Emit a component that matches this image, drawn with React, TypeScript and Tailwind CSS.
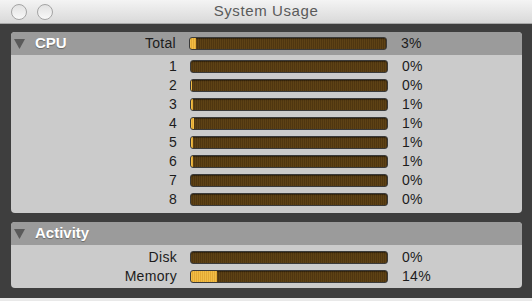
import React from 'react';

interface Row {
  label: string;
  fill: number;
  pct: string;
}

const cpuRows: Row[] = [
  { label: '1', fill: 0, pct: '0%' },
  { label: '2', fill: 1, pct: '0%' },
  { label: '3', fill: 1.5, pct: '1%' },
  { label: '4', fill: 2.5, pct: '1%' },
  { label: '5', fill: 1.5, pct: '1%' },
  { label: '6', fill: 1.5, pct: '1%' },
  { label: '7', fill: 0, pct: '0%' },
  { label: '8', fill: 0, pct: '0%' },
];

const activityRows: Row[] = [
  { label: 'Disk', fill: 0, pct: '0%' },
  { label: 'Memory', fill: 26, pct: '14%' },
];

const Meter: React.FC<{ fill: number }> = ({ fill }) => (
  <div className="w-[198px] h-[13px] rounded-[3px] border border-[#3a3a3a] overflow-hidden bg-[repeating-linear-gradient(90deg,#5e4215_0px,#5e4215_1px,#4f3610_1px,#4f3610_2px)] shadow-[inset_0_1px_1px_rgba(0,0,0,0.4)]">
    {fill > 0 && (
      <div
        className="h-full bg-[repeating-linear-gradient(90deg,#f2bd45_0px,#f2bd45_1px,#e2a935_1px,#e2a935_2px)]"
        style={{ width: `${fill}px` }}
      />
    )}
  </div>
);

const MeterRow: React.FC<{ row: Row }> = ({ row }) => (
  <div className="flex items-center h-[19px]">
    <div className="w-[166px] text-right text-[14px] tracking-[0.3px] text-[#1c1c1c]">{row.label}</div>
    <div className="ml-[13px]">
      <Meter fill={row.fill} />
    </div>
    <div className="ml-[14px] text-[14px] tracking-[0.3px] text-[#1c1c1c]">{row.pct}</div>
  </div>
);

const SectionHeader: React.FC<{ title: string; children?: React.ReactNode }> = ({ title, children }) => (
  <div className="flex items-center h-[23px] bg-[#9b9b9b] rounded-t-[4px]">
    <svg width="11" height="10" viewBox="0 0 11 10" className="ml-[3px]">
      <polygon points="0,0 11,0 5.5,10" fill="#5a5a5a" />
    </svg>
    <span className="ml-[10px] text-[15px] font-bold text-white [text-shadow:0_1px_1px_rgba(0,0,0,0.35)]">
      {title}
    </span>
    {children}
  </div>
);

export default function App() {
  return (
    <div
      className="w-[532px] h-[301px] bg-[#e9e9e9] overflow-hidden"
      style={{ fontFamily: '"Liberation Sans", Arial, sans-serif' }}
    >
      <div className="h-[298px] flex flex-col bg-[#3e3e3e]">
        {/* Title bar */}
        <div className="relative h-[24px] flex items-center justify-center bg-gradient-to-b from-[#f4f4f4] to-[#d9d9d9] border-b border-[#a8a8a8]">
          <div className="absolute left-[11px] top-[4px] flex gap-[10px]">
            <div className="w-[16px] h-[16px] rounded-full border border-[#a4a4a4] bg-gradient-to-b from-[#e2e2e2] to-[#f8f8f8]" />
            <div className="w-[16px] h-[16px] rounded-full border border-[#a4a4a4] bg-gradient-to-b from-[#e2e2e2] to-[#f8f8f8]" />
          </div>
          <span className="text-[15px] tracking-[0.6px] text-[#5a5a5a]">System Usage</span>
        </div>

        <div className="flex-1 pl-[11px] pr-[10px] pt-[8px] pb-[10px] flex flex-col gap-[9px]">
          {/* CPU */}
          <div className="rounded-[4px] bg-[#cbcbcb] h-[181px] flex flex-col">
            <SectionHeader title="CPU">
              <div className="ml-auto flex items-center">
                <div className="text-[14px] tracking-[0.3px] text-[#1c1c1c]">Total</div>
                <div className="ml-[13px]">
                  <Meter fill={6} />
                </div>
                <div className="ml-[14px] w-[121px] text-[14px] tracking-[0.3px] text-[#1c1c1c]">3%</div>
              </div>
            </SectionHeader>
            <div className="pt-[2px]">
              {cpuRows.map((r) => (
                <MeterRow key={r.label} row={r} />
              ))}
            </div>
          </div>

          {/* Activity */}
          <div className="rounded-[4px] bg-[#cbcbcb] flex-1 flex flex-col">
            <SectionHeader title="Activity" />
            <div className="pt-[3px]">
              {activityRows.map((r) => (
                <MeterRow key={r.label} row={r} />
              ))}
            </div>
          </div>
        </div>
      </div>
    </div>
  );
}
